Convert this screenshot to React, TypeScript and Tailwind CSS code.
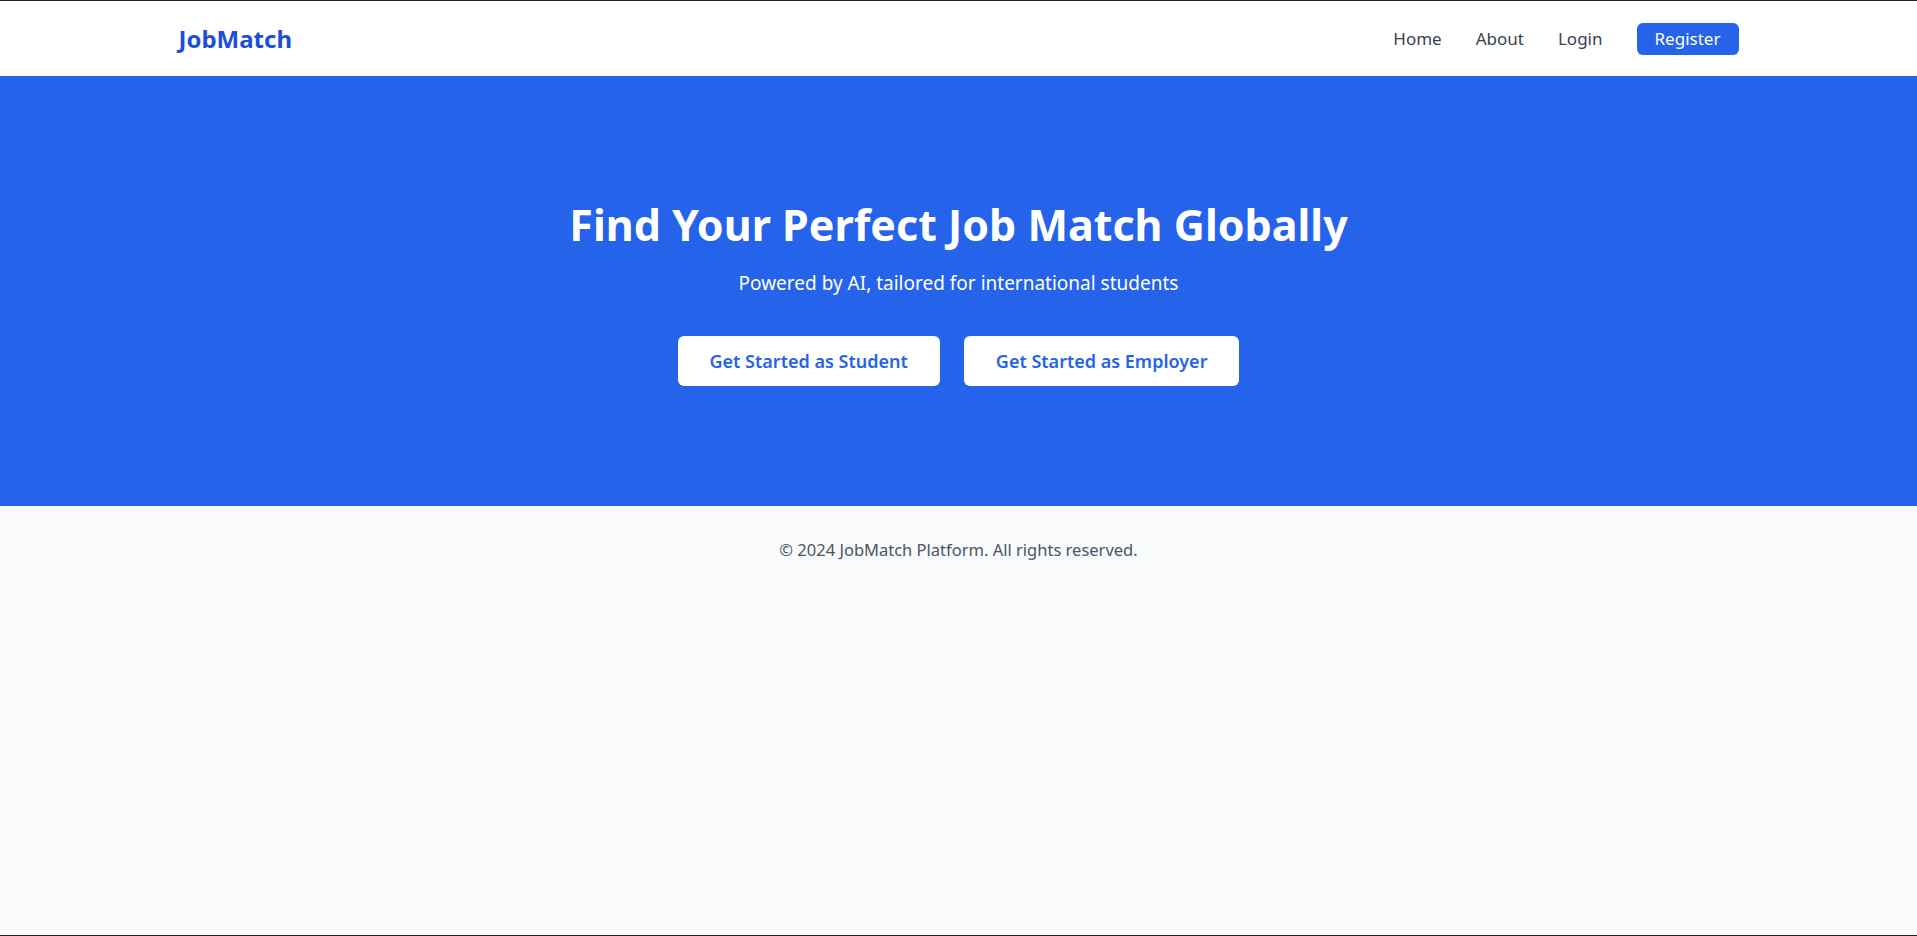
export default function App() {
  return (
    <div className="flex h-screen flex-col border-t border-b border-[#222] bg-[#f8fafc] font-['Noto_Sans',sans-serif]">
      {/* Navbar */}
      <header className="bg-white">
        <div className="mx-auto flex h-[75px] w-full max-w-[1560px] items-center justify-between pt-px">
          <span className="text-2xl font-bold text-[#1d4ed8]">JobMatch</span>
          <nav className="flex items-center gap-[34px] text-[17px] text-gray-700">
            <a href="#">Home</a>
            <a href="#">About</a>
            <a href="#">Login</a>
            <a href="#" className="flex h-8 w-[102px] items-center justify-center rounded-md bg-[#2563eb] text-white">
              Register
            </a>
          </nav>
        </div>
      </header>

      {/* Hero */}
      <section className="bg-[#2563eb] pt-[125px] pb-[120px] text-center text-white">
        <h1 className="text-[43px] leading-[48px] font-bold">Find Your Perfect Job Match Globally</h1>
        <p className="mt-[20px] text-[19px] leading-7">Powered by AI, tailored for international students</p>
        <div className="mt-[39px] flex justify-center gap-6">
          <button className="h-[50px] rounded-md bg-white px-8 text-lg font-semibold text-[#2563eb]">
            Get Started as Student
          </button>
          <button className="h-[50px] rounded-md bg-white px-8 text-lg font-semibold text-[#2563eb]">
            Get Started as Employer
          </button>
        </div>
      </section>

      {/* Footer */}
      <footer className="py-8 text-center text-[16.5px] leading-6 text-gray-600">
        © 2024 JobMatch Platform. All rights reserved.
      </footer>
    </div>
  );
}
